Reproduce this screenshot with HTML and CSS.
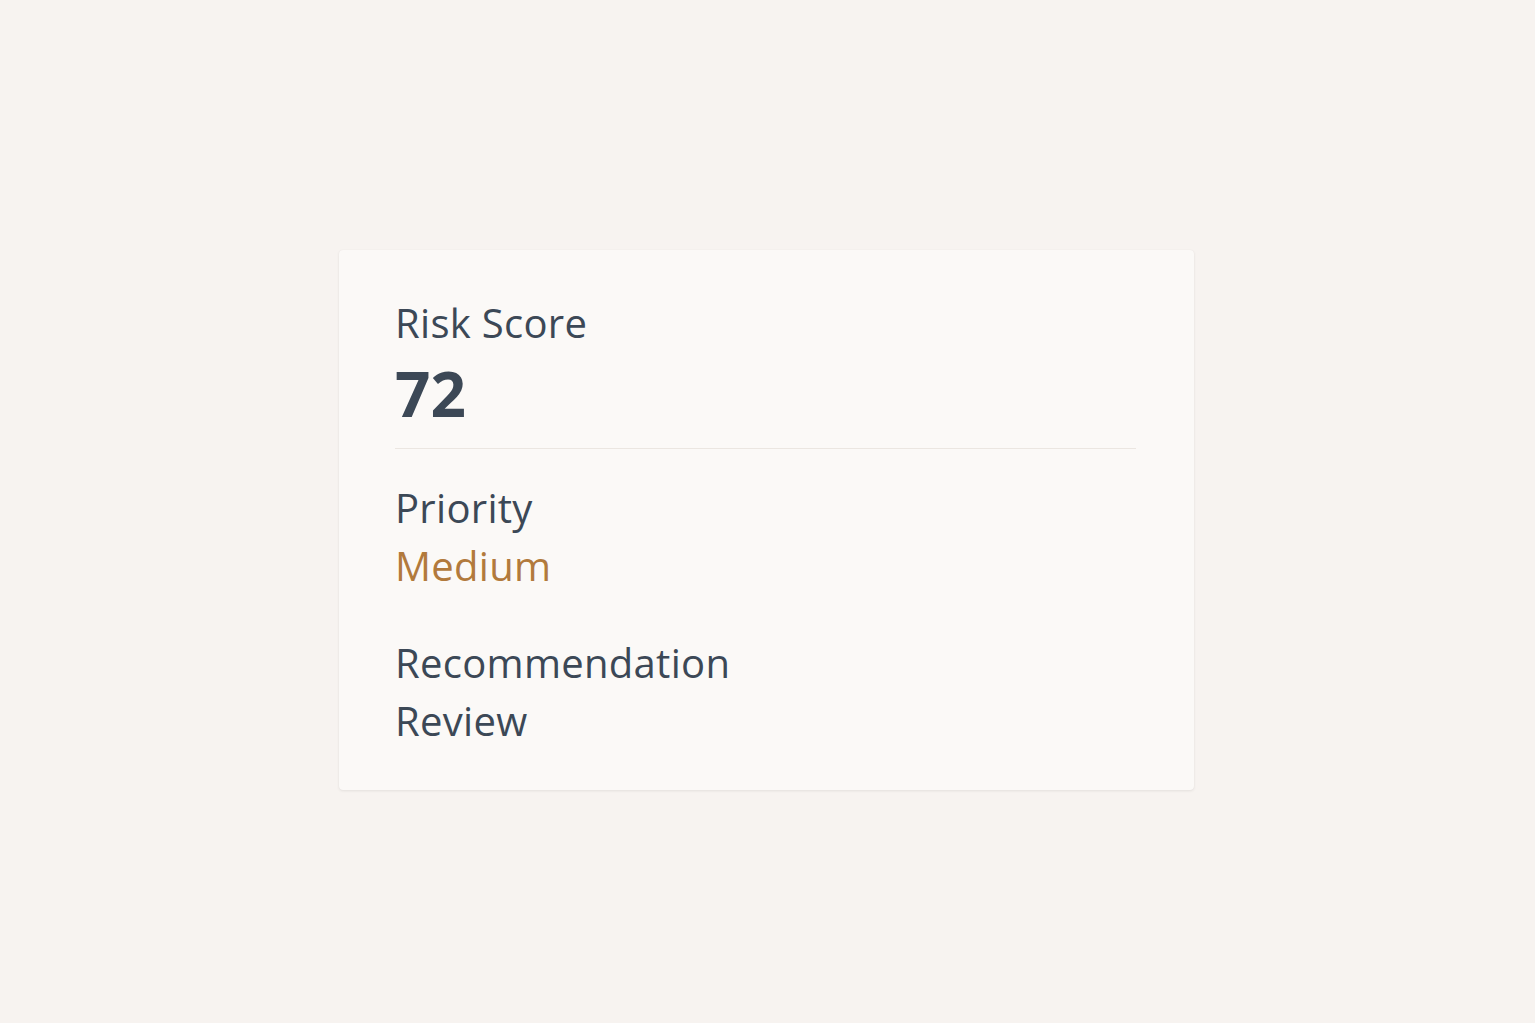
FILE: index.html
```html
<!DOCTYPE html>
<html>
<head>
<meta charset="utf-8">
<link rel="stylesheet" href="styles.css">
</head>
<body>
<main class="page">
  <section class="card">
    <div class="block score-block">
      <div class="label">Risk Score</div>
      <div class="score">72</div>
    </div>
    <div class="divider"></div>
    <div class="block">
      <div class="label">Priority</div>
      <div class="value medium">Medium</div>
    </div>
    <div class="block rec">
      <div class="label">Recommendation</div>
      <div class="value">Review</div>
    </div>
  </section>
</main>
</body>
</html>
```
FILE: styles.css
```css
html, body {
  margin: 0;
  padding: 0;
}
body {
  background: #f7f3f0;
  font-family: "Open Sans", Lato, sans-serif;
  color: #3c4856;
}
.page {
  height: 1023px;
  display: flex;
  justify-content: center;
  padding-top: 250px;
  box-sizing: border-box;
  padding-right: 2px;
}
.card {
  width: 855px;
  height: 540px;
  box-sizing: border-box;
  background: #fbf9f7;
  border-radius: 4px;
  box-shadow: 0 1px 3px rgba(0,0,0,0.08), 0 0 1px rgba(0,0,0,0.06);
  padding: 44px 58px 0 56px;
}
.label {
  font-size: 40px;
  line-height: 58px;
  letter-spacing: 0.3px;
}
.score {
  font-size: 62px;
  font-weight: 700;
  line-height: 83px;
}
.divider {
  height: 1px;
  background: #ebe6e1;
  margin-top: 13px;
  margin-bottom: 30px;
}
.value {
  font-size: 40px;
  line-height: 58px;
  letter-spacing: 0.3px;
}
.medium {
  color: #b27a3c;
}
.rec {
  margin-top: 39px;
}
```
